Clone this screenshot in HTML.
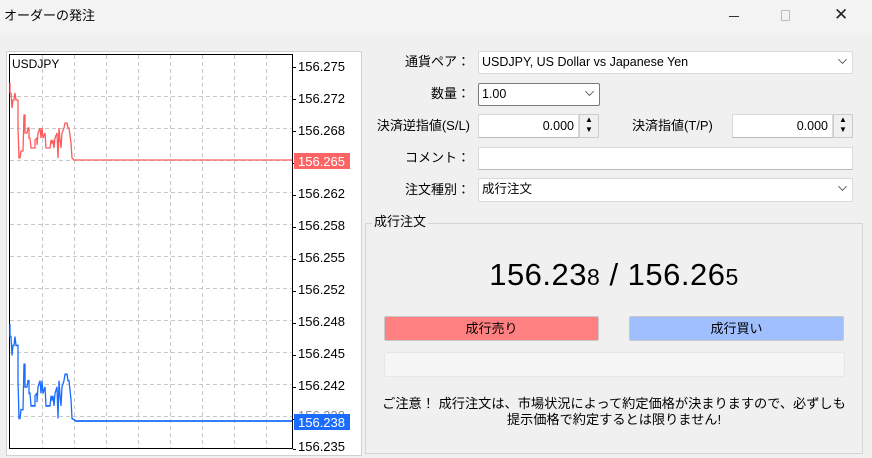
<!DOCTYPE html>
<html><head><meta charset="utf-8"><style>
*{margin:0;padding:0;box-sizing:border-box}
body{width:872px;height:458px;background:#f0f0f0;font-family:"Liberation Sans","Noto Sans CJK JP",sans-serif;font-size:13px;color:#000;position:relative;overflow:hidden}
.a{position:absolute;line-height:16px}
.lbl{position:absolute;text-align:right;width:200px;font-size:13px;line-height:16px}
.box{position:absolute;background:#fff;border:1px solid #d9d9d9;border-bottom-color:#b8b8b8}
.combo{position:absolute;background:#fff;border:1px solid #d9d9d9;border-radius:2px;line-height:20px;padding-left:3px;font-size:12.5px}
.chev{position:absolute;right:6px;width:7px;height:7px;border-right:1px solid #555;border-bottom:1px solid #555;transform:rotate(45deg) scale(.9);top:4px}
.pl{position:absolute;left:298px;font-size:13px;line-height:14px}
.spin{position:absolute;width:20px;background:#f0f0f0;border:1px solid #ccc}
</style></head><body>
<div class="a" style="left:0;top:0;width:872px;height:33px;background:#f3f3f3"></div>
<div class="a" style="left:4px;top:8px;font-size:13px">オーダーの発注</div>
<div class="a" style="left:729px;top:16px;width:10px;height:1px;background:#333"></div>
<div class="a" style="left:781px;top:10px;width:9px;height:11px;border:1px solid #bbb;border-radius:1px"></div>
<div class="a" style="left:834px;top:7px;font-size:17px;color:#222;font-weight:300">✕</div>

<div class="a" style="left:6px;top:51px;width:356px;height:405px;background:#fff;border:1px solid #d0d0d0"></div>
<svg class="a" style="left:0;top:0" width="872" height="458">
<g stroke="#c8c8c8" stroke-dasharray="4,3" stroke-width="1">
<path d="M42.5 55V448M74.5 55V448M106.5 55V448M138.5 55V448M170.5 55V448M202.5 55V448M234.5 55V448M266.5 55V448"/>
<path d="M10 96.5H292M10 128.5H292M10 160.5H292M10 192.5H292M10 224.5H292M10 256.5H292M10 288.5H292M10 320.5H292M10 352.5H292M10 384.5H292M10 416.5H292"/>
</g>
<rect x="9.5" y="54.5" width="283" height="394" fill="none" stroke="#000"/>
<g stroke="#000"><path d="M293 67.5h3M293 99.5h3M293 131.5h3M293 163.5h3M293 195.5h3M293 227.5h3M293 259.5h3M293 291.5h3M293 323.5h3M293 355.5h3M293 387.5h3M293 419.5h3M293 449.5h3"/></g>
<polyline fill="none" stroke="#ff5a5a" stroke-width="1.3" points="10,83 10,93 11,93 12,108 13,100 14,100 15,93 16,100 18,100 18,128 19,158 20,158 21,151 23,151 24,115 25,115 25,133 27,133 28,128 29,128 29,138 30,138 31,148 35,148 35,140 37,138 37,145 38,133 40,128 41,138 42,128 43,138 45,133 46,148 50,148 51,140 52,143 53,140 54,148 55,138 57,133 58,158 59,128 60,140 61,148 62,133 64,128 65,123 67,123 68,128 69,128 71,143 72,158 74,160 292,160"/>
<polyline fill="none" stroke="#1a6cff" stroke-width="1.3" transform="translate(0,219.4) scale(1,1.26)" points="10,83 10,93 11,93 12,108 13,100 14,100 15,93 16,100 18,100 18,128 19,158 20,158 21,151 23,151 24,115 25,115 25,133 27,133 28,128 29,128 29,138 30,138 31,148 35,148 35,140 37,138 37,145 38,133 40,128 41,138 42,128 43,138 45,133 46,148 50,148 51,140 52,143 53,140 54,148 55,138 57,133 58,158 59,128 60,140 61,148 62,133 64,128 65,123 67,123 68,128 69,128 71,143 72,158 76,160 292,160"/>
</svg>
<div class="a" style="left:12px;top:56px;font-size:12px">USDJPY</div>
<div class="pl" style="top:60px">156.275</div>
<div class="pl" style="top:92px">156.272</div>
<div class="pl" style="top:124px">156.268</div>
<div class="a" style="left:294px;top:153px;width:56px;height:16px;background:#ff6464"></div>
<div class="pl" style="top:155px;color:#fff">156.265</div>
<div class="pl" style="top:187px">156.262</div>
<div class="pl" style="top:219px">156.258</div>
<div class="pl" style="top:251px">156.255</div>
<div class="pl" style="top:283px">156.252</div>
<div class="pl" style="top:315px">156.248</div>
<div class="pl" style="top:347px">156.245</div>
<div class="pl" style="top:379px">156.242</div>
<div class="pl" style="top:409px;color:#888">156.238</div>
<div class="a" style="left:294px;top:414px;width:56px;height:16px;background:#1a6cff"></div>
<div class="pl" style="top:416px;color:#fff">156.238</div>
<div class="pl" style="top:440px">156.235</div>

<div class="lbl" style="left:270px;top:54px">通貨ペア：</div>
<div class="combo" style="left:478px;top:51px;width:375px;height:23px">USDJPY, US Dollar vs Japanese Yen<span class="chev"></span></div>
<div class="lbl" style="left:270px;top:86px">数量：</div>
<div class="combo" style="left:478px;top:83px;width:122px;height:23px;border-color:#7a7a7a">1.00<span class="chev"></span></div>
<div class="lbl" style="left:270px;top:118px">決済逆指値(S/L)</div>
<div class="box" style="left:478px;top:114px;width:101px;height:24px;text-align:right;padding-right:4px;line-height:22px;font-size:12.5px">0.000</div>
<div class="spin" style="left:579px;top:114px;height:24px;font-size:8px;text-align:center;line-height:10px">▲<br>▼</div>
<div class="a" style="left:632px;top:118px">決済指値(T/P)</div>
<div class="box" style="left:732px;top:114px;width:101px;height:24px;text-align:right;padding-right:4px;line-height:22px;font-size:12.5px">0.000</div>
<div class="spin" style="left:833px;top:114px;height:24px;font-size:8px;text-align:center;line-height:10px">▲<br>▼</div>
<div class="lbl" style="left:270px;top:150px">コメント：</div>
<div class="box" style="left:478px;top:147px;width:375px;height:23px"></div>
<div class="lbl" style="left:270px;top:182px">注文種別：</div>
<div class="combo" style="left:478px;top:178px;width:375px;height:24px">成行注文<span class="chev"></span></div>

<div class="a" style="left:365px;top:223px;width:498px;height:231px;border:1px solid #d5d5d5"></div>
<div class="a" style="left:372px;top:214px;background:#f0f0f0;padding:0 2px;font-size:13px">成行注文</div>
<div class="a" style="left:365px;top:258px;width:498px;text-align:center;font-size:31px;line-height:34px;letter-spacing:0.5px">156.23<span style="font-size:23px">8</span> / 156.26<span style="font-size:23px">5</span></div>
<div class="a" style="left:384px;top:316px;width:215px;height:25px;background:#ff8080;border:1px solid #c8c8c8;border-radius:2px;text-align:center;line-height:23px">成行売り</div>
<div class="a" style="left:629px;top:316px;width:215px;height:25px;background:#a0bfff;border:1px solid #c8c8c8;border-radius:2px;text-align:center;line-height:23px">成行買い</div>
<div class="a" style="left:384px;top:352px;width:461px;height:25px;background:#f5f5f5;border:1px solid #e6e6e6;border-radius:3px"></div>
<div class="a" style="left:365px;top:396px;width:498px;text-align:center;font-size:13.2px;line-height:16px">ご注意！ 成行注文は、市場状況によって約定価格が決まりますので、必ずしも<br>提示価格で約定するとは限りません!</div>
</body></html>
